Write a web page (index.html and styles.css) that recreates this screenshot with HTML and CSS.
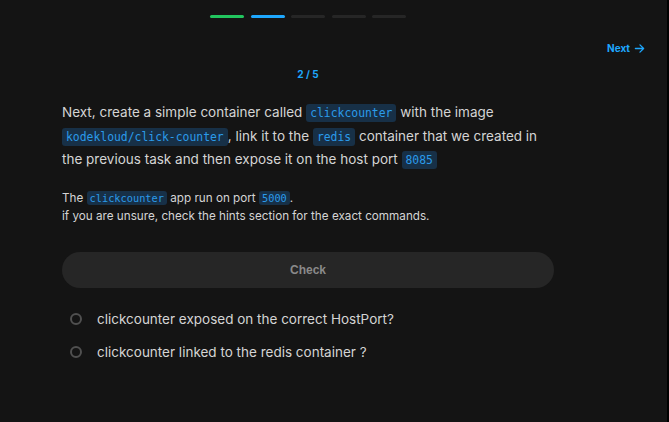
FILE: index.html
```html
<!DOCTYPE html>
<html>
<head>
<meta charset="utf-8">
<link rel="stylesheet" href="styles.css">
</head>
<body>
<div class="page">
  <div class="progress">
    <span class="seg done"></span>
    <span class="seg current"></span>
    <span class="seg"></span>
    <span class="seg"></span>
    <span class="seg"></span>
  </div>
  <div class="nav">
    <a class="next">Next
      <svg width="11" height="11" viewBox="0 0 12 12" fill="none" stroke="currentColor" stroke-width="1.4" stroke-linecap="round" stroke-linejoin="round"><path d="M1.5 6h9M6.5 2l4 4-4 4"/></svg>
    </a>
  </div>
  <div class="column">
    <div class="counter">2 / 5</div>
    <p class="question">Next, create a simple container called <code>clickcounter</code> with the image <code>kodekloud/click-counter</code>, link it to the <code>redis</code> container that we created in the previous task and then expose it on the host port <code>8085</code></p>
    <p class="note">The <code>clickcounter</code> app run on port <code>5000</code>.<br>if you are unsure, check the hints section for the exact commands.</p>
    <button class="check">Check</button>
    <ul class="checks">
      <li><span class="dot"></span>clickcounter exposed on the correct HostPort?</li>
      <li><span class="dot"></span>clickcounter linked to the redis container ?</li>
    </ul>
  </div>
</div>
</body>
</html>
```
FILE: styles.css
```css
html, body {
  margin: 0;
  padding: 0;
  background: #141414;
}
body {
  width: 669px;
  height: 422px;
  overflow: hidden;
  font-family: Inter, "Liberation Sans", sans-serif;
  border-right: 2px solid #000;
  box-sizing: border-box;
}
.page {
  padding-top: 15px;
}
.progress {
  display: flex;
  gap: 6.5px;
  margin-left: 210px;
}
.seg {
  width: 34px;
  height: 3px;
  border-radius: 2px;
  background: #262626;
}
.seg.done { background: #22c55e; }
.seg.current { background: #1ea7fd; }
.nav {
  display: flex;
  justify-content: flex-end;
  padding-right: 22px;
  margin-top: 22px;
}
.next {
  display: flex;
  align-items: center;
  gap: 4px;
  color: #1ea7fd;
  font-size: 10px;
  font-weight: 700;
  line-height: 16px;
}
.column {
  width: 492px;
  margin-left: 62px;
}
.counter {
  text-align: center;
  color: #1ea7fd;
  font-size: 10px;
  font-weight: 700;
  margin-top: 11px;
  line-height: 14px;
}
.question {
  margin: 20px 0 0;
  color: #d4d4d4;
  font-size: 13.5px;
  line-height: 22.5px;
}
code {
  font-family: "DejaVu Sans Mono", "Liberation Mono", monospace;
  font-size: 11.4px;
  background: #173047;
  color: #2b9bea;
  padding: 2px 4px;
  border-radius: 3px;
}
.note code {
  font-size: 10.3px;
  padding: 1px 3px;
}
.note {
  margin: 17px 0 0;
  color: #d4d4d4;
  font-size: 11.7px;
  line-height: 18px;
}
.check {
  display: block;
  width: 492px;
  height: 36px;
  margin-top: 27px;
  border: none;
  border-radius: 18px;
  background: #262626;
  color: #8a8a8a;
  font-family: "Liberation Sans", Arial, sans-serif;
  font-weight: 700;
  font-size: 12px;
}
.checks {
  list-style: none;
  margin: 15px 0 0;
  padding: 0;
}
.checks li {
  display: flex;
  align-items: center;
  height: 33px;
  padding-left: 8px;
  color: #d4d4d4;
  font-size: 13.5px;
}
.dot {
  width: 8px;
  height: 8px;
  border: 2px solid #505050;
  border-radius: 50%;
  margin-right: 15px;
}
```
